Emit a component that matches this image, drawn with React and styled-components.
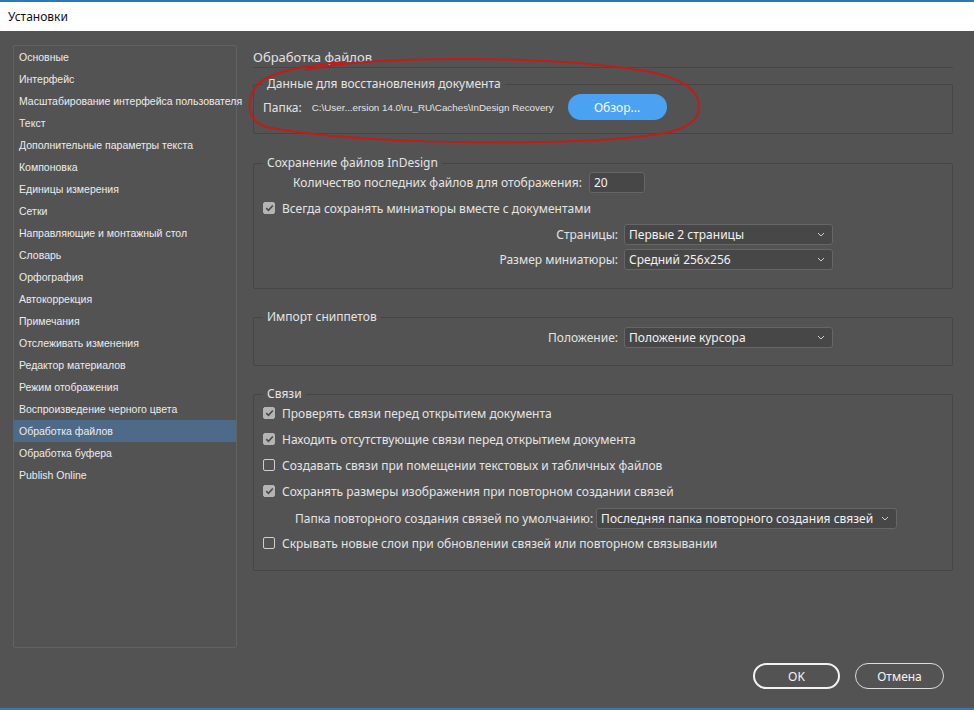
import React from "react";
import styled, { createGlobalStyle } from "styled-components";

const GlobalStyle = createGlobalStyle`
    html, body {
        margin: 0;
        padding: 0;
        background: #535353;
    }
    * {
        box-sizing: border-box;
    }
`;

const Window = styled.div`
    position: relative;
    width: 974px;
    height: 710px;
    display: flex;
    flex-direction: column;
    background: #535353;
    border-top: 2px solid #2b79b4;
    border-bottom: 2px solid #3c78a8;
    font-family: "Noto Sans", "Open Sans", sans-serif;
    color: #e4e4e4;
    overflow: hidden;
`;

const TitleBar = styled.div`
    height: 29px;
    flex: none;
    background: #ffffff;
    color: #111;
    font-size: 12px;
    display: flex;
    align-items: center;
    padding-left: 8px;
`;

const Body = styled.div`
    flex: 1;
    display: flex;
    flex-direction: column;
    padding: 14px 0 19px 13px;
`;

const Main = styled.div`
    display: flex;
    gap: 16px;
    height: 603px;
`;

const Sidebar = styled.ul`
    list-style: none;
    margin: 0;
    padding: 0;
    width: 224px;
    flex: none;
    border: 1px solid #626262;
    border-radius: 2px;
`;

const NavItem = styled.li`
    height: 22px;
    display: flex;
    align-items: center;
    padding-left: 5px;
    white-space: nowrap;
    font-family: "Liberation Sans", Arial, sans-serif;
    font-size: 10.5px;
    color: #ececec;
    background: ${(p) => (p.$active ? "#4d6a89" : "transparent")};
`;

const Content = styled.div`
    width: 700px;
    display: flex;
    flex-direction: column;
`;

const Heading = styled.div`
    margin-top: 4px;
    padding-bottom: 2px;
    font-size: 13px;
    line-height: 16px;
    color: #e2e2e2;
    border-bottom: 1px solid #474747;
`;

const Group = styled.fieldset`
    margin: ${(p) => p.$top}px 0 0;
    padding: 0 9px ${(p) => p.$bottom}px;
    border: 1px solid #464646;
    border-radius: 2px;
    min-width: 0;
    display: flex;
    flex-direction: column;
`;

const Legend = styled.legend`
    padding: 0 4px;
    font-size: 12px;
    line-height: 14px;
    color: #e4e4e4;
`;

const Row = styled.div`
    display: flex;
    align-items: center;
    height: ${(p) => p.$h || 20}px;
    margin-top: ${(p) => p.$mt || 0}px;
    padding-left: ${(p) => p.$indent || 0}px;
    font-size: 12px;
    gap: ${(p) => p.$gap || 6}px;
    white-space: nowrap;
`;

const FieldLabel = styled.span`
    width: ${(p) => (p.$w ? `${p.$w}px` : "auto")};
    text-align: right;
    flex: none;
`;

const PathText = styled.span`
    font-family: "Liberation Sans", Arial, sans-serif;
    font-size: 9.8px;
    margin-left: 4px;
    margin-right: 8px;
`;

const BrowseButton = styled.button`
    width: 99px;
    height: 26px;
    border: none;
    border-radius: 13px;
    background: #4ba2f2;
    color: #f6fbff;
    font-family: "Noto Sans", sans-serif;
    font-size: 12px;
    padding: 0;
`;

const TextInput = styled.div`
    width: 56px;
    height: 21px;
    border: 1px solid #666;
    border-radius: 3px;
    background: #474747;
    color: #f2f2f2;
    font-size: 12px;
    display: flex;
    align-items: center;
    padding-left: 4px;
`;

const SelectBox = styled.div`
    width: ${(p) => p.$w}px;
    height: 21px;
    border: 1px solid #666;
    border-radius: 3px;
    background: #474747;
    color: #f2f2f2;
    font-size: 12px;
    display: flex;
    align-items: center;
    justify-content: space-between;
    padding: 0 7px 0 4px;
`;

const CheckRow = styled(Row)`
    gap: 7px;
`;

const Box = styled.span`
    width: 12px;
    height: 12px;
    flex: none;
    border-radius: 2px;
    border: 1px solid ${(p) => (p.$on ? "#b4b4b4" : "#cfcfcf")};
    background: ${(p) => (p.$on ? "#b4b4b4" : "transparent")};
    display: flex;
    align-items: center;
    justify-content: center;
`;

const Footer = styled.div`
    margin-top: 15px;
    display: flex;
    justify-content: flex-end;
    gap: 15px;
    padding-right: 30px;
`;

const DialogButton = styled.button`
    width: ${(p) => p.$w}px;
    height: 26px;
    border-radius: 13px;
    border: ${(p) => (p.$primary ? "2px solid #f2f2f2" : "1.5px solid #dcdcdc")};
    background: transparent;
    color: #f4f4f4;
    font-family: "Noto Sans", sans-serif;
    font-size: 12px;
    padding: 0;
`;

const Annotation = styled.svg`
    position: absolute;
    left: 0;
    top: 0;
    pointer-events: none;
`;

function Chevron() {
    return (
        <svg width="8" height="5" viewBox="0 0 8 5">
            <path d="M1 1 L4 4 L7 1" fill="none" stroke="#cfcfcf" strokeWidth="1" />
        </svg>
    );
}

function Check({ on }) {
    return (
        <Box $on={on}>
            {on && (
                <svg width="9" height="8" viewBox="0 0 9 8">
                    <path d="M1.2 4.2 L3.5 6.3 L7.8 1.5" fill="none" stroke="#4a4a4a" strokeWidth="1.6" />
                </svg>
            )}
        </Box>
    );
}

const navItems = [
    "Основные",
    "Интерфейс",
    "Масштабирование интерфейса пользователя",
    "Текст",
    "Дополнительные параметры текста",
    "Компоновка",
    "Единицы измерения",
    "Сетки",
    "Направляющие и монтажный стол",
    "Словарь",
    "Орфография",
    "Автокоррекция",
    "Примечания",
    "Отслеживать изменения",
    "Редактор материалов",
    "Режим отображения",
    "Воспроизведение черного цвета",
    "Обработка файлов",
    "Обработка буфера",
    "Publish Online",
];

export default function App() {
    return (
        <>
            <GlobalStyle />
            <Window>
                <TitleBar>Установки</TitleBar>
                <Body>
                    <Main>
                        <Sidebar>
                            {navItems.map((item) => (
                                <NavItem key={item} $active={item === "Обработка файлов"}>
                                    {item}
                                </NavItem>
                            ))}
                        </Sidebar>
                        <Content>
                            <Heading>Обработка файлов</Heading>

                            <Group $top={9} $bottom={13}>
                                <Legend>Данные для восстановления документа</Legend>
                                <Row $h={26} $mt={3} $gap={0}>
                                    <span>Папка:</span>
                                    <PathText>C:\User...ersion 14.0\ru_RU\Caches\InDesign Recovery</PathText>
                                    <BrowseButton>Обзор...</BrowseButton>
                                </Row>
                            </Group>

                            <Group $top={22} $bottom={19}>
                                <Legend>Сохранение файлов InDesign</Legend>
                                <Row $h={21} $mt={2} $indent={30} $gap={7}>
                                    <span>Количество последних файлов для отображения:</span>
                                    <TextInput>20</TextInput>
                                </Row>
                                <CheckRow $mt={5}>
                                    <Check on />
                                    <span>Всегда сохранять миниатюры вместе с документами</span>
                                </CheckRow>
                                <Row $mt={6}>
                                    <FieldLabel $w={355}>Страницы:</FieldLabel>
                                    <SelectBox $w={209}>
                                        <span>Первые 2 страницы</span>
                                        <Chevron />
                                    </SelectBox>
                                </Row>
                                <Row $mt={5}>
                                    <FieldLabel $w={355}>Размер миниатюры:</FieldLabel>
                                    <SelectBox $w={209}>
                                        <span>Средний 256x256</span>
                                        <Chevron />
                                    </SelectBox>
                                </Row>
                            </Group>

                            <Group $top={21} $bottom={17}>
                                <Legend>Импорт сниппетов</Legend>
                                <Row $h={21} $mt={3}>
                                    <FieldLabel $w={355}>Положение:</FieldLabel>
                                    <SelectBox $w={209}>
                                        <span>Положение курсора</span>
                                        <Chevron />
                                    </SelectBox>
                                </Row>
                            </Group>

                            <Group $top={21} $bottom={17}>
                                <Legend>Связи</Legend>
                                <CheckRow $mt={2}>
                                    <Check on />
                                    <span>Проверять связи перед открытием документа</span>
                                </CheckRow>
                                <CheckRow $mt={6}>
                                    <Check on />
                                    <span>Находить отсутствующие связи перед открытием документа</span>
                                </CheckRow>
                                <CheckRow $mt={6}>
                                    <Check />
                                    <span>Создавать связи при помещении текстовых и табличных файлов</span>
                                </CheckRow>
                                <CheckRow $mt={6}>
                                    <Check on />
                                    <span>Сохранять размеры изображения при повторном создании связей</span>
                                </CheckRow>
                                <Row $h={21} $mt={7} $indent={32} $gap={3}>
                                    <span>Папка повторного создания связей по умолчанию:</span>
                                    <SelectBox $w={301}>
                                        <span>Последняя папка повторного создания связей</span>
                                        <Chevron />
                                    </SelectBox>
                                </Row>
                                <CheckRow $mt={4}>
                                    <Check />
                                    <span>Скрывать новые слои при обновлении связей или повторном связывании</span>
                                </CheckRow>
                            </Group>
                        </Content>
                    </Main>
                    <Footer>
                        <DialogButton $primary $w={87}>OK</DialogButton>
                        <DialogButton $w={89}>Отмена</DialogButton>
                    </Footer>
                </Body>
                <Annotation width="974" height="710" viewBox="0 0 974 710">
                    <path
                        d="M 305 68 C 380 52, 560 54, 650 70 C 690 78, 703 94, 698 111 C 693 127, 668 134, 600 138 C 500 143, 350 141, 266 125 C 244 117, 247 95, 258 82 C 270 70, 310 62, 345 60"
                        fill="none"
                        stroke="#c41a1a"
                        strokeWidth="2"
                    />
                </Annotation>
            </Window>
        </>
    );
}
